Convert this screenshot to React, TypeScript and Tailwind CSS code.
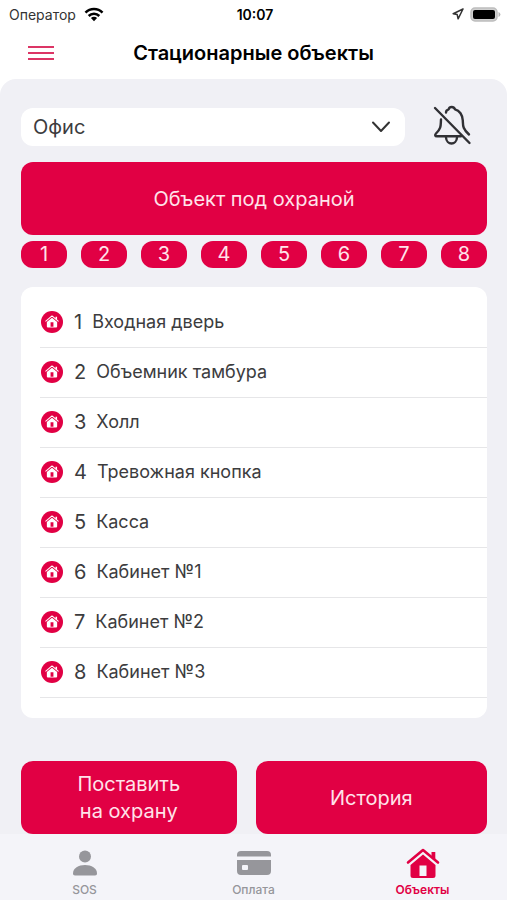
import { useState } from "react";

const zones = [
  "Входная дверь",
  "Объемник тамбура",
  "Холл",
  "Тревожная кнопка",
  "Касса",
  "Кабинет №1",
  "Кабинет №2",
  "Кабинет №3",
];

function HouseIcon({ className }: { className?: string }) {
  return (
    <svg viewBox="0 0 34 31" className={className} fill="currentColor" aria-hidden="true">
      <path
        d="M2 14.500 L17 2 L32 14.500"
        fill="none"
        stroke="currentColor"
        strokeWidth="2.600"
        strokeLinecap="round"
        strokeLinejoin="round"
      />
      <path d="M25.500 4h3.800v8l-3.800-3.200z" />
      <path
        fillRule="evenodd"
        d="M17 6.500 L29.500 17 V27.500 a2.500 2.500 0 0 1-2.500 2.500 H7 a2.500 2.500 0 0 1-2.500-2.500 V17 Z M13.500 17.500 V28 H20.500 V17.500 Z"
      />
    </svg>
  );
}

function StatusBar() {
  return (
    <div className="grid grid-cols-3 items-center h-7 pl-[9px] pr-[6px] text-black">
      <div className="flex items-center gap-2 text-[14px] text-[#333]">
        Оператор
        <svg viewBox="0 0 20 15" className="w-5 h-[15px]" aria-hidden="true">
          <g fill="none" stroke="#000" strokeWidth="2.600">
            <path d="M1.500 5.600a12 12 0 0 1 17 0" />
            <path d="M4.700 9a7.500 7.500 0 0 1 10.600 0" />
          </g>
          <path d="M10 14.200 6.900 11.100a4.400 4.400 0 0 1 6.200 0z" />
        </svg>
      </div>
      <div className="text-center text-[14px] font-semibold">10:07</div>
      <div className="flex items-center justify-end gap-[6px]">
        <svg viewBox="0 0 12 12" className="w-3 h-3" aria-hidden="true">
          <path
            d="M11 1 1.200 5.700l4 .9.900 4.200z"
            fill="none"
            stroke="#333"
            strokeWidth="1.500"
            strokeLinejoin="round"
          />
        </svg>
        <svg viewBox="0 0 31 15" className="w-[31px] h-[15px]" aria-hidden="true">
          <rect x="1" y="1" width="26" height="13" rx="4" fill="#d0d0d0" stroke="#bdbdbd" strokeWidth="1.500" />
          <rect x="3" y="3" width="22" height="9" rx="2" />
          <path d="M28.500 5v5a2.600 2.600 0 0 0 0-5z" fill="#b5b5b5" />
        </svg>
      </div>
    </div>
  );
}

function BellOffIcon() {
  return (
    <svg
      viewBox="0 0 40 42"
      className="w-10 h-[42px]"
      fill="none"
      stroke="#303034"
      strokeWidth="2.400"
      strokeLinecap="round"
      strokeLinejoin="round"
      aria-hidden="true"
    >
      <path d="M3 4 37.500 39" />
      <path d="M14 8.500C14 6.300 15.600 5.600 16.700 5.300 17.500 2.200 21.800 2.200 23 5.300 27.500 6.300 30.600 11 30.800 16.500 31 22 30.600 24.500 37 30.500" />
      <path d="M9 15.500C8.600 21 9.600 24 4 29.500 2.600 31.200 3 32.300 5 32.300H29" />
      <path d="M14 33.500C14.500 41.500 24.500 41.500 25 33.500" />
    </svg>
  );
}

export default function App() {
  const [site, setSite] = useState("Офис");

  return (
    <div className="min-h-screen flex flex-col bg-white font-['Inter','Liberation_Sans',sans-serif] text-[#3c3c3e]">
      <StatusBar />

      <header className="grid grid-cols-[40px_1fr_40px] items-center h-[51px] px-5 pb-[2px]">
        <button type="button" aria-label="Меню" className="flex flex-col gap-1 pl-2">
          <span className="w-[26px] h-[2px] bg-[#dc3565]" />
          <span className="w-[26px] h-[2px] bg-[#dc3565]" />
          <span className="w-[26px] h-[2px] bg-[#dc3565]" />
        </button>
        <h1 className="text-center text-[20px] font-semibold text-black whitespace-nowrap">
          Стационарные объекты
        </h1>
      </header>

      <main className="flex-1 flex flex-col rounded-t-2xl bg-[#f0f0f5] pl-[21px] pr-5 pt-[25px]">
        <div className="flex items-end gap-[27px] pr-[15px]">
          <div className="relative flex-1">
            <select
              aria-label="Объект"
              value={site}
              onChange={(e) => setSite(e.target.value)}
              className="block w-full h-[38px] appearance-none rounded-xl bg-white px-3 text-[20px]"
            >
              <option>Офис</option>
            </select>
            <svg
              viewBox="0 0 20 12"
              className="absolute right-[14px] top-[13px] w-5 h-3 pointer-events-none"
              fill="none"
              stroke="#333"
              strokeWidth="2"
              strokeLinecap="round"
              strokeLinejoin="round"
              aria-hidden="true"
            >
              <path d="M2 1.500 10 10l8-8.500" />
            </svg>
          </div>
          <button type="button" aria-label="Отключить уведомления">
            <BellOffIcon />
          </button>
        </div>

        <button
          type="button"
          className="mt-4 h-[73px] shrink-0 rounded-xl bg-[#e10044] text-[20px] text-[#ffe3ea]"
        >
          Объект под охраной
        </button>

        <div className="mt-[6px] grid grid-cols-8 gap-[14px]">
          {zones.map((name, i) => (
            <button
              key={name}
              type="button"
              aria-label={`Зона ${i + 1}`}
              className="h-[27px] rounded-xl bg-[#e10044] text-[20px] leading-[27px] text-[#ffe3ea]"
            >
              {i + 1}
            </button>
          ))}
        </div>

        <ul className="mt-[19px] rounded-xl bg-white pt-[11px] pb-5 pl-[19px]">
          {zones.map((name, i) => (
            <li key={name} className="flex items-center h-[50px] border-b border-[#e6e6e8] pb-[2px]">
              <span className="flex items-center justify-center ml-px w-[22px] h-[22px] rounded-full bg-[#e10044] text-white">
                <HouseIcon className="w-[14px] h-[13px]" />
              </span>
              <span className="ml-[11px] text-[20px]">{i + 1}</span>
              <span className="ml-[10px] text-[18px]">{name}</span>
            </li>
          ))}
        </ul>

        <div className="mt-auto pt-6 grid grid-cols-[216fr_232fr] gap-[19px]">
          <button
            type="button"
            className="h-[73px] rounded-xl bg-[#e10044] text-[20px] leading-[27px] text-[#ffe3ea]"
          >
            Поставить
            <br />
            на охрану
          </button>
          <button
            type="button"
            className="h-[73px] rounded-xl bg-[#e10044] text-[20px] text-[#ffe3ea]"
          >
            История
          </button>
        </div>
      </main>

      <nav className="grid grid-cols-3 h-[66px] bg-[#f4f4f9] text-[12px] font-medium text-[#96969b]">
        <button type="button" className="flex flex-col items-center gap-[2px] pt-[13px]">
          <span className="flex items-center h-8">
            <svg viewBox="0 0 24 26" className="w-6 h-[26px]" fill="currentColor" aria-hidden="true">
              <circle cx="12" cy="6.500" r="6" />
              <path d="M0 23.500C0 18 5.500 15 12 15s12 3 12 8.500c0 1.300-.7 2-2 2H2c-1.300 0-2-.7-2-2z" />
            </svg>
          </span>
          SOS
        </button>
        <button type="button" className="flex flex-col items-center gap-[2px] pt-[13px]">
          <span className="flex items-center h-8">
            <svg viewBox="0 0 34 24" className="w-[34px] h-6" fill="currentColor" aria-hidden="true">
              <path d="M0 5.500V4a4 4 0 0 1 4-4h26a4 4 0 0 1 4 4v1.500z" />
              <path
                fillRule="evenodd"
                d="M0 9h34v11a4 4 0 0 1-4 4H4a4 4 0 0 1-4-4zM6 14a1 1 0 0 0-1 1v3a1 1 0 0 0 1 1h4a1 1 0 0 0 1-1v-3a1 1 0 0 0-1-1z"
              />
            </svg>
          </span>
          Оплата
        </button>
        <button
          type="button"
          aria-current="page"
          className="flex flex-col items-center gap-[2px] pt-[13px] font-semibold text-[#e10044]"
        >
          <span className="flex items-center h-8">
            <HouseIcon className="w-[34px] h-[31px]" />
          </span>
          Объекты
        </button>
      </nav>
    </div>
  );
}
